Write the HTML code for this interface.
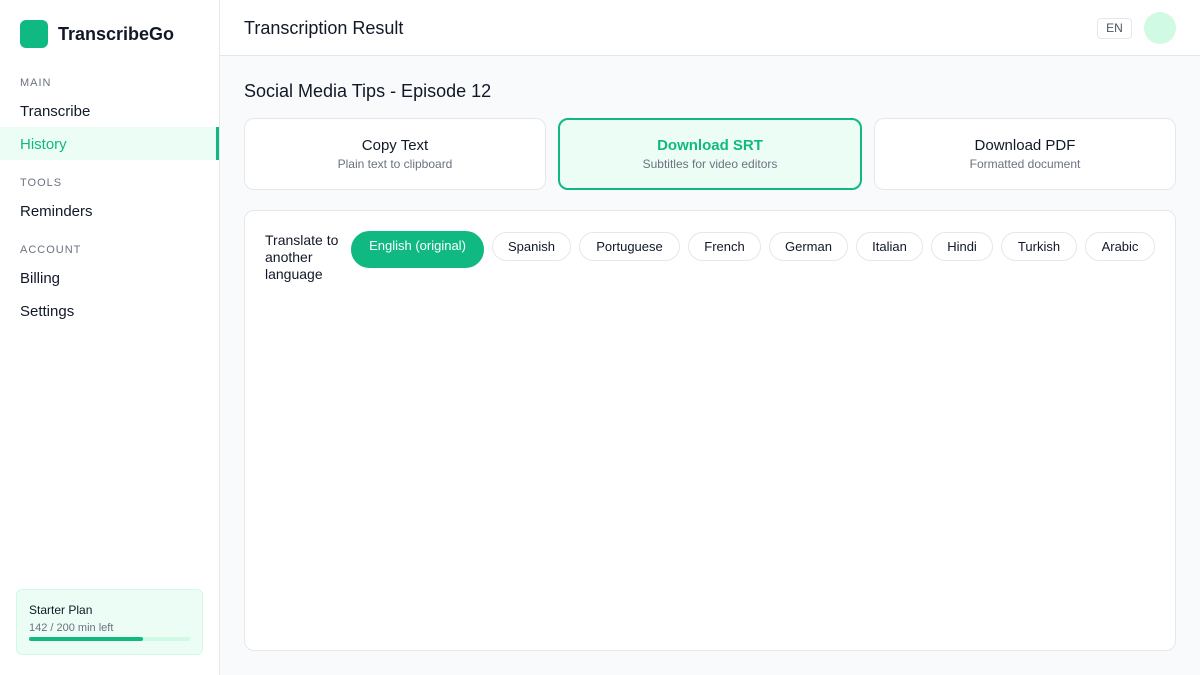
<!DOCTYPE html>
<html><head><meta charset="utf-8"><style>
*{box-sizing:border-box;margin:0;padding:0}
body{width:1200px;height:675px;font-family:"Liberation Sans",sans-serif;background:#f8fafc;position:relative;overflow:hidden;color:#111827}
.sb{position:absolute;left:0;top:0;width:220px;height:675px;background:#fff;border-right:1px solid #e5e7eb}
.logo{position:absolute;left:20px;top:20px;width:28px;height:28px;border-radius:6px;background:#10b981}
.brand{position:absolute;left:58px;top:24px;font-size:18px;font-weight:bold;color:#111827}
.sec{position:absolute;left:20px;font-size:11px;letter-spacing:1px;color:#6b7280}
.it{position:absolute;left:0;width:219px;height:33px;padding-left:20px;line-height:35px;font-size:15px;color:#111827}
.act{background:#ecfdf5;color:#10b981;border-right:3px solid #10b981}
.plan{position:absolute;left:16px;top:589px;width:187px;height:66px;border:1px solid #d1fae5;background:#ecfdf5;border-radius:6px}
.hd{position:absolute;left:220px;top:0;width:980px;height:56px;background:#fff;border-bottom:1px solid #e5e7eb}
.card{position:absolute;top:118px;height:72px;background:#fff;border:1px solid #e5e7eb;border-radius:10px;text-align:center}
.card b{display:block;font-weight:normal;font-size:15px;margin-top:18px}
.card span{display:block;font-size:12px;color:#6b7280;margin-top:3px}
.pill{position:absolute;top:232px;height:29px;border:1px solid #e5e7eb;border-radius:15px;font-size:13px;line-height:27px;text-align:center;background:#fff}
</style></head><body>
<div class="sb">
<div class="logo"></div><div class="brand">TranscribeGo</div>
<div class="sec" style="top:77px">MAIN</div>
<div class="it" style="top:94px">Transcribe</div>
<div class="it act" style="top:127px">History</div>
<div class="sec" style="top:177px">TOOLS</div>
<div class="it" style="top:194px">Reminders</div>
<div class="sec" style="top:244px">ACCOUNT</div>
<div class="it" style="top:261px">Billing</div>
<div class="it" style="top:294px">Settings</div>
<div class="plan">
<div style="position:absolute;left:12px;top:13px;font-size:12px">Starter Plan</div>
<div style="position:absolute;left:12px;top:32px;font-size:11px;color:#6b7280">142 / 200 min left</div>
<div style="position:absolute;left:12px;top:47px;width:161px;height:4px;border-radius:2px;background:#d1fae5"><div style="width:114px;height:4px;border-radius:2px;background:#10b981"></div></div>
</div>
</div>
<div class="hd">
<div style="position:absolute;left:24px;top:18px;font-size:18px">Transcription Result</div>
<div style="position:absolute;left:877px;top:18px;width:35px;height:21px;border:1px solid #e5e7eb;border-radius:4px;font-size:12px;color:#4b5563;text-align:center;line-height:19px">EN</div>
<div style="position:absolute;left:924px;top:12px;width:32px;height:32px;border-radius:50%;background:#d1fae5"></div>
</div>
<div style="position:absolute;left:244px;top:81px;font-size:18px">Social Media Tips - Episode 12</div>
<div class="card" style="left:244px;width:302px"><b>Copy Text</b><span>Plain text to clipboard</span></div>
<div class="card" style="left:558px;width:304px;background:#ecfdf5;border:2px solid #10b981"><b style="color:#10b981;font-weight:bold;margin-top:17px">Download SRT</b><span>Subtitles for video editors</span></div>
<div class="card" style="left:874px;width:302px"><b>Download PDF</b><span>Formatted document</span></div>
<div style="position:absolute;left:244px;top:210px;width:932px;height:441px;background:#fff;border:1px solid #e5e7eb;border-radius:10px"></div>
<div style="position:absolute;left:265px;top:232px;width:84px;font-size:14px;line-height:17px">Translate to another language</div>
<div class="pill" style="left:351px;top:231px;width:133px;height:37px;border-radius:19px;background:#10b981;border-color:#10b981;color:#fff;line-height:28px">English (original)</div>
<div class="pill" style="left:492px;width:79px">Spanish</div>
<div class="pill" style="left:579px;width:101px">Portuguese</div>
<div class="pill" style="left:688px;width:73px">French</div>
<div class="pill" style="left:769px;width:79px">German</div>
<div class="pill" style="left:856px;width:67px">Italian</div>
<div class="pill" style="left:931px;width:62px">Hindi</div>
<div class="pill" style="left:1001px;width:76px">Turkish</div>
<div class="pill" style="left:1085px;width:70px">Arabic</div>
</body></html>
